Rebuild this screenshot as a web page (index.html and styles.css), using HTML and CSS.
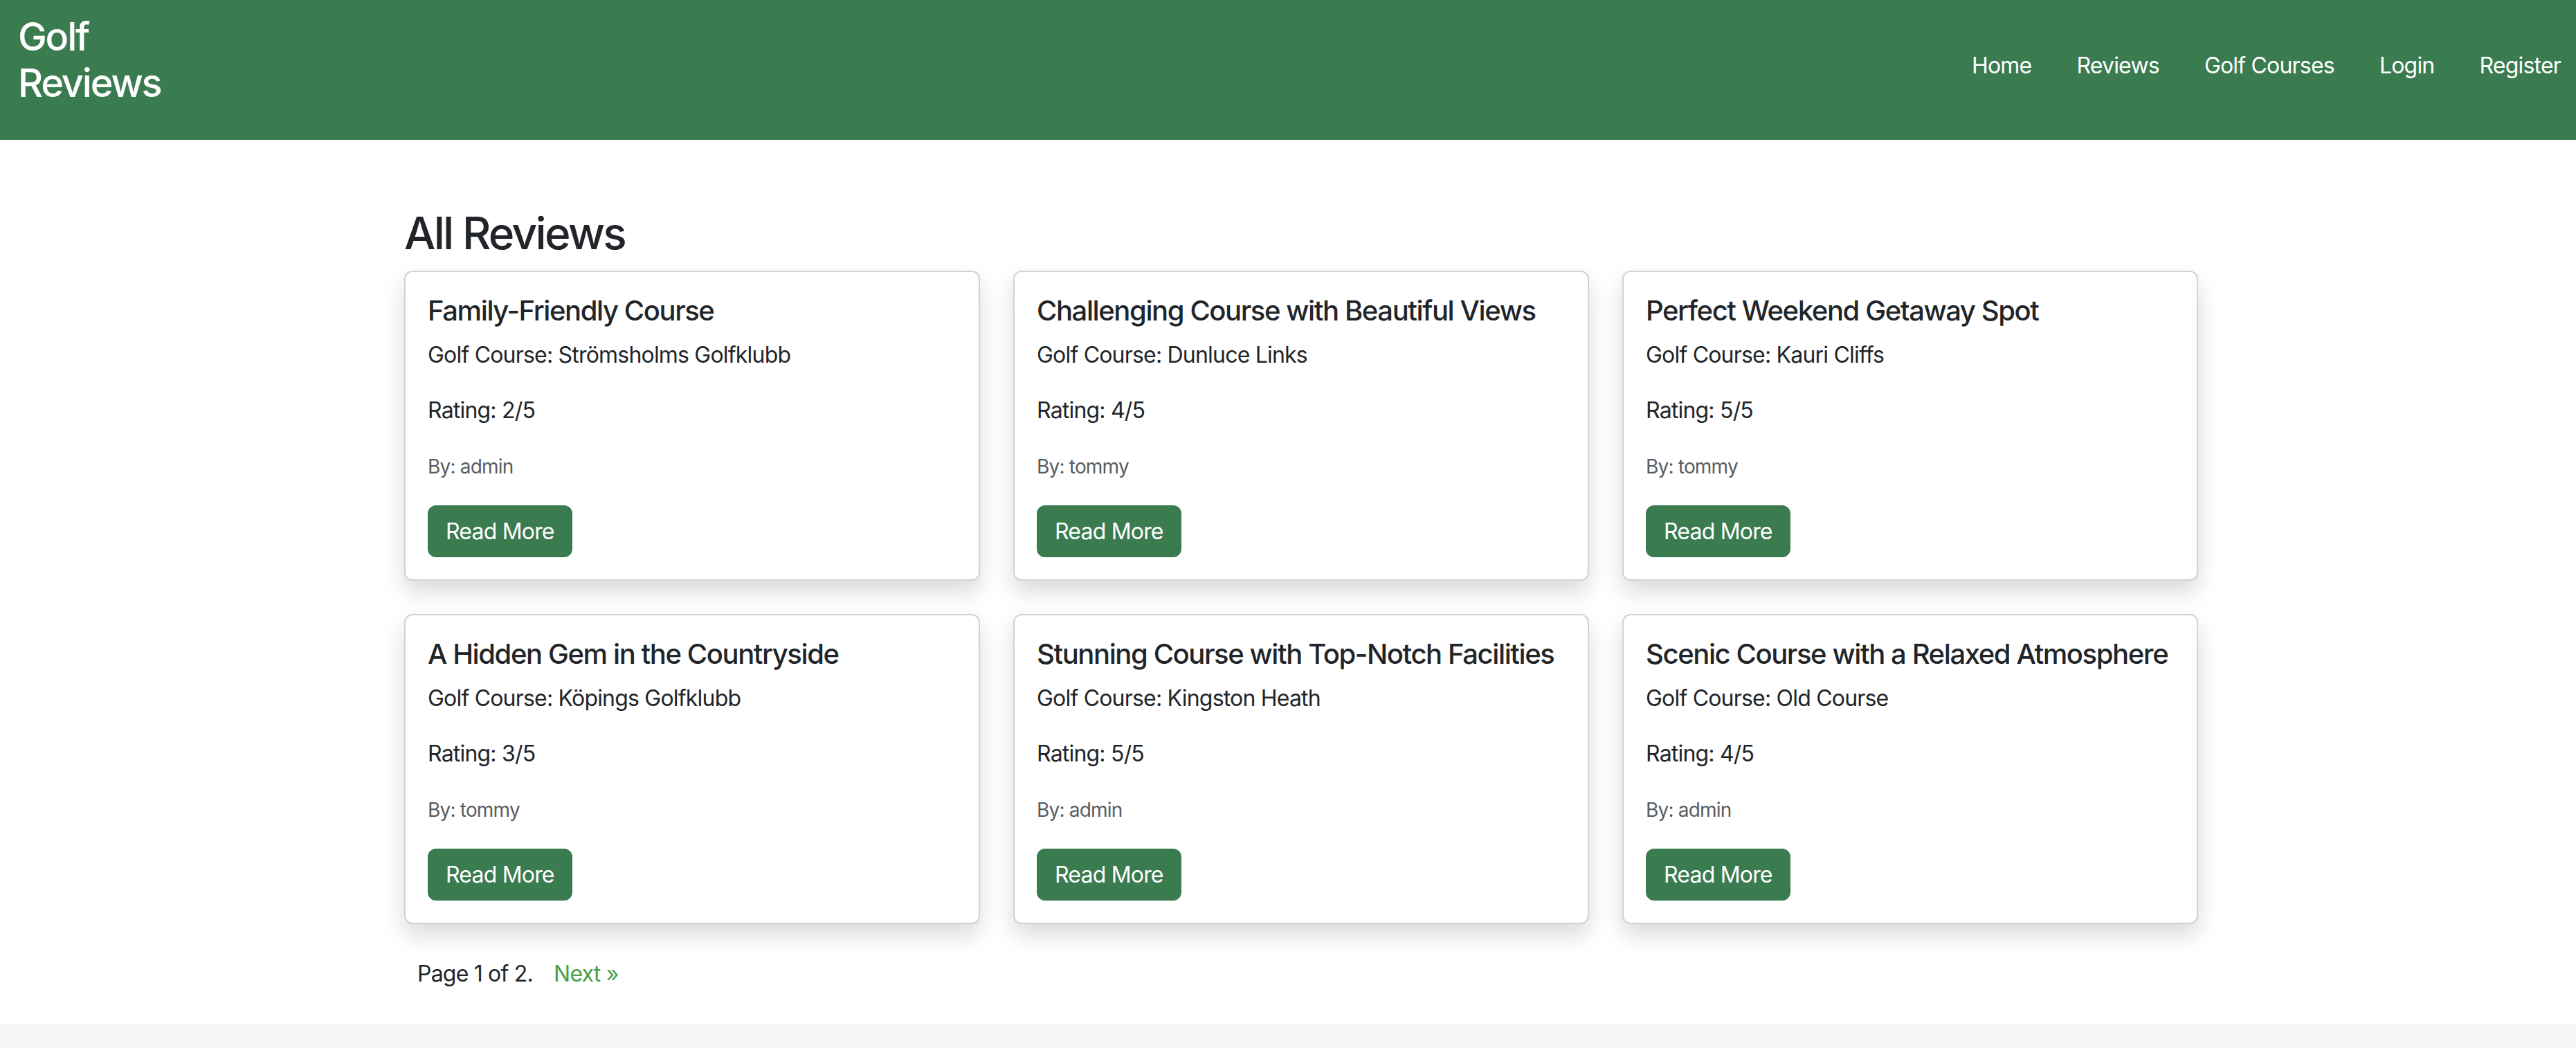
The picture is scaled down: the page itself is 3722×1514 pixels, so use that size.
FILE: index.html
```html
<!DOCTYPE html>
<html lang="en">
<head>
<meta charset="utf-8">
<title>All Reviews - Golf Reviews</title>
<link rel="stylesheet" href="styles.css">
</head>
<body>
<header class="navbar">
  <a class="brand" href="#">Golf Reviews</a>
  <nav>
    <ul class="nav-links">
      <li><a href="#">Home</a></li>
      <li><a href="#">Reviews</a></li>
      <li><a href="#">Golf Courses</a></li>
      <li><a href="#">Login</a></li>
      <li><a href="#">Register</a></li>
    </ul>
  </nav>
</header>
<main class="page">
  <div class="container">
    <h2 class="page-title">All Reviews</h2>
    <div class="review-grid">
      <div class="card">
        <h5 class="card-title">Family-Friendly Course</h5>
        <p>Golf Course: Strömsholms Golfklubb</p>
        <p>Rating: 2/5</p>
        <p><small class="muted">By: admin</small></p>
        <a href="#" class="btn">Read More</a>
      </div>
      <div class="card">
        <h5 class="card-title">Challenging Course with Beautiful Views</h5>
        <p>Golf Course: Dunluce Links</p>
        <p>Rating: 4/5</p>
        <p><small class="muted">By: tommy</small></p>
        <a href="#" class="btn">Read More</a>
      </div>
      <div class="card">
        <h5 class="card-title">Perfect Weekend Getaway Spot</h5>
        <p>Golf Course: Kauri Cliffs</p>
        <p>Rating: 5/5</p>
        <p><small class="muted">By: tommy</small></p>
        <a href="#" class="btn">Read More</a>
      </div>
      <div class="card">
        <h5 class="card-title">A Hidden Gem in the Countryside</h5>
        <p>Golf Course: Köpings Golfklubb</p>
        <p>Rating: 3/5</p>
        <p><small class="muted">By: tommy</small></p>
        <a href="#" class="btn">Read More</a>
      </div>
      <div class="card">
        <h5 class="card-title">Stunning Course with Top-Notch Facilities</h5>
        <p>Golf Course: Kingston Heath</p>
        <p>Rating: 5/5</p>
        <p><small class="muted">By: admin</small></p>
        <a href="#" class="btn">Read More</a>
      </div>
      <div class="card">
        <h5 class="card-title">Scenic Course with a Relaxed Atmosphere</h5>
        <p>Golf Course: Old Course</p>
        <p>Rating: 4/5</p>
        <p><small class="muted">By: admin</small></p>
        <a href="#" class="btn">Read More</a>
      </div>
    </div>
    <div class="pagination">
      <span class="current">Page 1 of 2.</span>
      <a href="#" class="next">Next &raquo;</a>
    </div>
  </div>
</main>
<footer class="footer"></footer>
</body>
</html>
```

FILE: styles.css
```css
* { box-sizing: border-box; }

html, body {
  margin: 0;
  padding: 0;
  background: #ffffff;
}

body {
  font-family: Inter, "Noto Sans", "Liberation Sans", sans-serif;
  font-size: 32px;
  line-height: 48px;
  letter-spacing: -0.025em;
  color: #212529;
}

a { text-decoration: none; }

.navbar {
  display: flex;
  justify-content: space-between;
  align-items: flex-start;
  height: 202px;
  padding: 20px 22px 0 26px;
  background: #3a7b50;
}

.brand {
  display: block;
  width: 230px;
  color: #ffffff;
  font-size: 56px;
  line-height: 67px;
  font-weight: 500;
  letter-spacing: -0.04em;
}

.nav-links {
  display: flex;
  gap: 65px;
  list-style: none;
  margin: 51px 0 0 0;
  padding: 0;
}

.nav-links a {
  color: #ffffff;
  font-size: 32px;
  line-height: 48px;
}

.page {
  padding: 96px 0 48px 38px;
}

.container {
  width: 2640px;
  margin: 0 auto;
  padding: 0 24px;
}

.page-title {
  margin: 0 0 16px 0;
  font-size: 64px;
  line-height: 77px;
  font-weight: 500;
  letter-spacing: -0.042em;
}

.review-grid {
  display: grid;
  grid-template-columns: repeat(3, 1fr);
  gap: 48px;
  margin-bottom: 48px;
}

.card {
  background: #ffffff;
  border: 2px solid rgba(0, 0, 0, 0.175);
  border-radius: 12px;
  box-shadow: 0 16px 32px rgba(0, 0, 0, 0.15);
  padding: 32px;
}

.card-title {
  margin: 0 0 16px 0;
  font-size: 40px;
  line-height: 48px;
  font-weight: 500;
  letter-spacing: -0.035em;
  white-space: nowrap;
}

.card p {
  margin: 0 0 32px 0;
}

.muted {
  font-size: 28px;
  color: #595c5f;
}

.btn {
  display: inline-block;
  padding: 12px 24px;
  border: 2px solid #3a7b50;
  border-radius: 12px;
  background: #3a7b50;
  color: #ffffff;
  font-size: 32px;
  line-height: 47px;
}

.pagination {
  padding-left: 19px;
}

.next {
  margin-left: 22px;
  color: #48a04a;
}

.footer {
  height: 120px;
  background: #f5f6f8;
}
```
